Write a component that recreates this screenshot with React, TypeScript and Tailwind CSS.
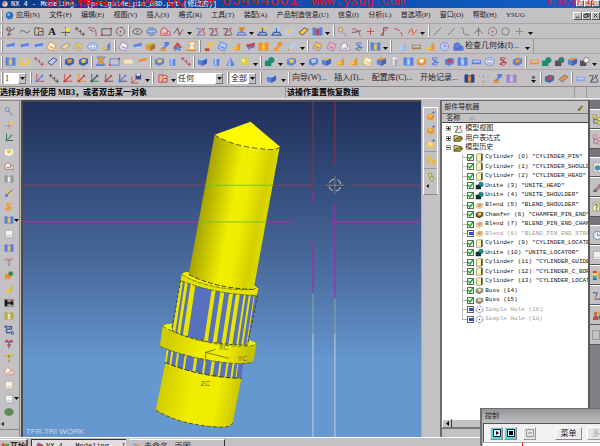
import React from "react"

const B = "#5b82dc"
const L = "#b4ccf8"
const Y = "#f2c648"
const O = "#ee922c"
const R = "#c8474b"
const K = "#55505a"
const G = "#1f8a74"
const W = "#f3f1ea"
const P = "#a284c4"

type IconDef = [kind: string, a?: string, b?: string]

const shapes: Record<string, (a: string, b: string) => React.JSX.Element> = {
  sketch: (a, b) => <g fill="none" stroke={a}><circle cx="4" cy="3.5" r="2" /><path d="M5 6L11 2M5 6L3 10L7 8.500" /><path d="M1 4h3M3 9l2 2" stroke={b} /></g>,
  wave: (a) => <path d="M1 7C3 4 5 5 6.500 6.500S10 8 11.500 5" fill="none" stroke={a} />,
  panel: (a, b) => <g stroke={a}><path d="M2 2h4v8H2zM6 6h5v4H6zM6 2l5 1v3" fill="none" /><path d="M3 8L9 3" stroke={b} strokeWidth="1.500" /></g>,
  star: (a, b) => <g><path d="M6 1v10M1 7h10" stroke={a} /><circle cx="8" cy="4" r="2.500" fill={b} /></g>,
  dots: (a, b) => <g fill="none" stroke={a}><path d="M1 3h4M3 1v4M5 6h3M7 4v4M8 9h4M10 7v4" /><path d="M4 4l5 5" stroke={b} strokeWidth=".7" /></g>,
  corner: (a, b) => <g fill="none" stroke={a}><path d="M1 2h5Q10 2 10 11" /><path d="M3 4l4 2" stroke={b} /></g>,
  rect: (a, b) => <g><path d="M1 3h10v7H1z" fill="none" stroke={a} /><path d="M0 9h2v2H0zM10 2h2v2h-2z" fill={b} /></g>,
  circle: (a, b) => <g><circle cx="6" cy="6" r="4.500" fill="none" stroke={a} strokeDasharray="4 1" /><circle cx="6" cy="6" r="1" fill={b} /></g>,
  ring: (a) => <circle cx="6" cy="6" r="4" fill="none" stroke={a} />,
  ellipse: (a, b) => <g><ellipse cx="6" cy="6" rx="5" ry="3" fill="none" stroke={a} /><circle cx="6" cy="6" r="1.200" fill={b} /></g>,
  blob: (a, b) => <g><ellipse cx="6" cy="6" rx="5" ry="4" fill={b} stroke={a} /><path d="M3 5q3-2 6 0M3 7q3 2 6 0" fill="none" stroke={a} /></g>,
  dome: (a, b) => <g><path d="M1 10V6q0-4 4-4 2 0 3 3 3 0 3 3v2z" fill={b} stroke={a} /><path d="M3 8h5V5" fill="none" stroke={a} /></g>,
  zig: (a, b) => <g><path d="M1 8l4-5 2 6 4-5" fill="none" stroke={a} /><path d="M4 2h2v2H4zM6 8h2v2H6z" fill={b} /></g>,
  cut: (a, b) => <g fill="none"><path d="M1 3h5L3 10h7" stroke={a} /><path d="M11 2L2 10M8 2l3 8" stroke={b} /></g>,
  project: (a, b) => <g><path d="M3 1h7l-2 5H4z" fill={b} /><path d="M1 10L3 7h6l2 3zM6 2v6" fill="none" stroke={a} strokeWidth="1.300" /></g>,
  plus: (a) => <path d="M6 2v8M2 6h8" stroke={a} />,
  arc: (a, b) => <g fill="none"><path d="M1 3Q9 3 10 11" stroke={a} /><path d="M1 7Q6 7 11 5" stroke={b} /></g>,
  step: (a, b) => <g fill="none"><path d="M2 10h3V2h5" stroke={a} /><path d="M5 6L10 2M5 6L2 10" stroke={b} /></g>,
  line: (a) => <path d="M2 10L10 2" stroke={a} />,
  spline: (a) => <path d="M2 2Q6 2 5 6T11 10" fill="none" stroke={a} />,
  anchor: (a) => <path d="M6 1v10M1 8Q6 3 11 8M4 4h4" fill="none" stroke={a} />,
  sheet: (a, b) => <g><path d="M1 4L11 2L10 8Q6 7 4 10z" fill={b} /><path d="M1 4L11 2L10 6Q6 5 3 7z" fill={a} /></g>,
  plane: (a, b) => <g><path d="M4 1l7 3-3 7-7-3z" fill={b} stroke={a} /><path d="M4 6l4 2" stroke={a} strokeWidth="1.500" /></g>,
  slab: (a, b) => <path d="M1 7l6-5 4 2-6 6z" fill={b} stroke={a} />,
  bend: (a, b) => <g><path d="M6 1h5v3L7 7v4H2V8l4-2z" fill={a} /><path d="M2 8l5 0v3H2z" fill={b} /></g>,
  wedge: (a, b) => <g><path d="M10 1v9H3L1 8l5-2z" fill={a} /><path d="M3 10L1 8l5-2 2 2z" fill={b} /></g>,
  cube: (a, b) => <g><path d="M1 4l5-2 5 1v5l-5 3-5-2z" fill={a} /><path d="M1 4l5-2 5 1-5 2z" fill={b} /><path d="M6 5l5-2v5l-5 3z" fill="#1d2c5c" opacity=".35" /></g>,
  pocket: (a, b) => <g><path d="M1 4l5-2 5 1v5l-5 3-5-2z" fill={a} /><path d="M3 5l3-2 3 1-1 3-3 1z" fill={b} /></g>,
  cylinder: (a, b) => <g><path d="M3 2.500h6v8H3z" fill={a} /><path d="M4 3h2v7H4z" fill={b} /><ellipse cx="6" cy="2.500" rx="3" ry="1" fill={b} /></g>,
  solid: () => <g><path d="M2 2l2-1h6v9l-2 1H2z" fill="#f7f2b8" stroke="#77754c" strokeWidth=".8" /><path d="M8 2l2-1v9l-2 1z" fill="#55543c" /></g>,
  cone: (a, b) => <g><path d="M6 1l4.500 9Q6 12 1.500 10z" fill={a} /><path d="M6 1v10L3 10z" fill={b} /></g>,
  sphere: (a, b) => <g><circle cx="6" cy="6" r="4" fill={a} /><circle cx="5" cy="5" r="1.500" fill={b} /></g>,
  books: (a, b) => <g stroke={a} strokeWidth=".8"><path d="M1 2h3v8H1zM8 2h3v8H8z" fill={a} /><path d="M4 3h4v7H4z" fill={b} /></g>,
  roof: (a, b) => <g><path d="M6 1l5 6-2 1-3-3-3 4-2-1z" fill={a} /><path d="M6 5l4 5-2 1-2-2-2 2-2-1z" fill={b} /></g>,
  bar: (a, b) => <g><path d="M1 4h10v5H1z" fill={a} /><path d="M2 5h8v2H2z" fill={b} /></g>,
  hour: (a, b) => <g><path d="M2 1h9L8 5l3 5H1l4-5z" fill={b} stroke={a} strokeWidth=".8" /><path d="M1 10h9" stroke={a} strokeWidth="2" /></g>,
  csys: (a, b) => <g fill="none"><path d="M3 1v8h8" stroke={a} /><path d="M3 9l6-6" stroke={b} strokeWidth="1.300" /><path d="M1.500 8h3v2h-3zM8 2h2v2H8z" fill={b} /></g>,
  union: (a, b) => <g><path d="M1 5h7v6H1z" fill={a} /><circle cx="8" cy="4.500" r="3" fill={b} stroke={a} strokeWidth=".7" /></g>,
  pencil: (a, b) => <g><path d="M2 9l6-7 3 2-6 7H2z" fill={a} /><path d="M1 11l2-3 2 2z" fill={b} /></g>,
  key: (a, b) => <g><circle cx="4" cy="4" r="2.500" fill={b} stroke={a} /><path d="M5 6l5 4-2 1" stroke={a} fill="none" /></g>,
  disk: (a, b) => <g><path d="M5 1h6v6H5z" fill={a} /><path d="M6 1h4v2H6z" fill={W} /><path d="M1 4v7h7M1 11l4-4" stroke={b} fill="none" /></g>,
  clock: (a, b) => <g><circle cx="6" cy="6" r="4.500" fill={b} stroke={a} /><path d="M6 3v3h3" fill="none" stroke={a} /></g>,
  page: (a, b) => <g><path d="M1.500 1.500h9v9h-9z" fill={b} stroke={a} strokeWidth=".8" /><path d="M3 8h6" stroke={a} strokeWidth=".6" /></g>,
  tree: (a, b) => <g><path d="M2 2v8h4M2 6h4" fill="none" stroke={a} /><path d="M1 1h4v3H1zM6 4h4v3H6zM6 8h4v3H6z" fill={b} stroke={a} strokeWidth=".5" /></g>,
  web: (a, b) => <g><path d="M2 1h8v10H2z" fill={W} stroke="#8b91a8" strokeWidth=".7" /><circle cx="6" cy="6.500" r="3" fill={a} /><path d="M3.500 6.500q3-3 5 0" stroke={b} fill="none" /></g>,
  help: (a, b) => <g><path d="M1 1h7v9H1z" fill={b} stroke={a} strokeWidth=".7" /><path d="M3 4q0-2 2-1.500T5 6v1M5 8v1.300" fill="none" stroke="#28409c" /></g>,
  rainbow: () => <g><path d="M1 1h4v2.500H1z" fill="#e33" /><path d="M1 3.500h4V6H1z" fill="#fd3" /><path d="M1 6h4v2.500H1z" fill="#3c5" /><path d="M1 8.500h4V11H1z" fill="#36d" /><path d="M7 2h4v8H7z" fill={O} /></g>,
  flag: () => <g><path d="M1 2q2-1 4 0v4q-2-1-4 0z" fill="#e0442c" /><path d="M6 2q2 1 5 0v4q-3 1-5 0z" fill="#3ca83c" /><path d="M1 7q2-1 4 0v4q-2-1-4 0z" fill="#3464cc" /><path d="M6 7q2 1 5 0v4q-3 1-5 0z" fill="#f2c62c" /></g>,
  dumbbell: (a, b) => <g><path d="M0 1h12v10H0z" fill="#999" /><path d="M1 2h3v8H1zM8 4h3v4H8zM4 5h4v2H4z" fill={a} /><path d="M8 2h3v2H8z" fill={b} /></g>,
  people: (a, b) => <g><circle cx="4" cy="4" r="2" fill={a} /><path d="M1 11q0-5 3-5t3 5z" fill={b} /><circle cx="9" cy="3" r="2" fill={O} /><path d="M7 10q0-5 2-5t2 5z" fill={G} /></g>,
  fold: (a, b) => <g><path d="M3 1l6 1-3 3 4 2-4 4-5-2 4-3-3-2z" fill={a} /><path d="M3 2l5 1-3 1zM4 8l4 0-2 2z" fill={b} /></g>,
  puff: (a, b) => <g><path d="M2 5l2-2 3 1 3 2-1 4-4 1-4-2z" fill={a} /><circle cx="5" cy="6" r="2" fill={b} /><path d="M9 0v4M7 2h4" stroke="#4a70c8" /></g>,
  bead: (a, b) => <g fill={a}><circle cx="4" cy="3.500" r="2.500" /><circle cx="3" cy="8.500" r="2.500" /><circle cx="9" cy="8.500" r="2.500" /><circle cx="4" cy="3" r="1" fill={b} /></g>,
  chain: (a, b) => <g fill={b} stroke={a}><ellipse cx="5" cy="4" rx="2" ry="3" /><ellipse cx="7" cy="8" rx="2" ry="3" /></g>,
  tools: (a, b) => <g><path d="M2 2l8 8" stroke={b} strokeWidth="1.800" /><path d="M10 2L3 9" stroke={K} /><circle cx="3" cy="9" r="2" fill={a} /></g>,
  tbar: (a, b) => <g><path d="M1 3h10M6 3v8" stroke={a} strokeWidth="1.500" /><path d="M2 1h3v3H2zM7 1h3v3H7zM4 6h4v2H4z" fill={b} /></g>,
  linkage: (a, b) => <g fill="none" stroke={a}><path d="M2 2h7v3H3v4h8" strokeWidth="1.500" /><path d="M1 1h2v2H1zM9 8h2v3H9z" fill={b} /></g>,
}

const Icon = ({ def, size = "size-[11px]" }: { def: IconDef; size?: string }) => {
  const [kind, a = K, b = L] = def
  if (kind === "text") return <span className="font-['Liberation_Serif',serif] text-[11px] leading-none font-bold">A</span>
  return (
    <svg viewBox="0 0 12 12" className={`${size} shrink-0`} aria-hidden="true">
      {shapes[kind](a, b)}
    </svg>
  )
}

const Caret = () => (
  <svg viewBox="0 0 5 3" className="h-[3px] w-[5px] shrink-0" aria-hidden="true">
    <path d="M0 0h5L2.500 3z" fill="#111" />
  </svg>
)

const Grip = () => (
  <span className="mx-px h-[12px] w-[2px] shrink-0 border-l border-white bg-[#8d8a90]" />
)

type Item = IconDef | "v"

const Group = ({ items, width }: { items: Item[]; width: string }) => (
  <div className={`flex h-full shrink-0 items-center ${width}`} role="toolbar">
    <Grip />
    {items.map((it, i) =>
      it === "v" ? (
        <button key={i} aria-label="more" className="mt-[5px] flex w-[8px] shrink-0 justify-center"><Caret /></button>
      ) : (
        <button key={i} aria-label={it[0]} className="flex min-w-0 flex-1 items-center justify-center"><Icon def={it} /></button>
      )
    )}
  </div>
)

const curveRow: { width: string; items: Item[] }[] = [
  { width: "w-[127px]", items: [["sketch", K, R], ["wave"], ["panel", K, Y], ["text"], ["star", K, "#efe33a"], ["dots", K, R], ["corner", R, K], ["rect", K, R], ["circle", K, R]] },
  { width: "w-[205px]", items: [["ellipse", K, R], ["blob", "#4b6496", L], ["dome", R, "#e8c8cc"], ["zig", K, R], "v", ["cut", B, R], ["cut", K, R], ["cut", K, R], ["project", B, O], "v", ["project", "#3c62b4", Y], ["project", "#3c62b4", L], ["pocket", L, Y], ["slab", K, Y], ["books", B, R], "v"] },
  { width: "w-[95px]", items: [["key", P, Y], ["arc", R, K], ["plus", R], ["step", K, R], ["arc", R, "#c4c1c4"], ["zig", R, O], "v"] },
  { width: "w-[107px]", items: [["line", "#777"], ["line", "#777"], ["spline", "#777"], ["anchor", "#777"], ["circle", "#777", R], ["ring", "#777"], ["plus", "#888"], "v"] },
]

const surfaceRow: { width: string; items: Item[] }[] = [
  { width: "w-[113px]", items: [["sheet", B, L], ["sheet", "#6b7ce0", L], ["sheet", B, L], ["plane", O, W], ["slab", "#a88d5a", "#e4d6a8"], ["plane", "#8eaede", Y], ["blob", B, W], ["wedge", B, Y]] },
  { width: "w-[85px]", items: [["plane", P, W], ["sheet", B, L], ["cube", O, "#9bd04a"], ["bend", B, O], ["roof", R, B], ["hour", O, W]] },
  { width: "w-[108px]", items: [["bend", Y, R], ["plane", B, L], ["wedge", O, Y], ["sheet", R, B], ["books", O, Y], ["bend", O, "#e7a24a"], ["pencil", L, O], "v"] },
  { width: "w-[60px]", items: [["plane", P, Y], ["plane", P, "#efb0b8"], ["dome", P, W], ["fold", B, Y]] },
  { width: "w-[23px]", items: [["books", B, Y], "v"] },
]

const featureRow: { width: string; items: Item[] }[] = [
  { width: "w-[59px]", items: [["books", B, Y], ["pocket", Y, L], ["dots", R, P], ["slab", "#39496e", L]] },
  { width: "w-[31px]", items: [["pocket", "#3565bc", O], ["pocket", "#3565bc", Y]] },
  { width: "w-[59px]", items: [["hour", B, O], ["rect", B, R], ["bar", "#e5dba6", W], ["sheet", O, L]] },
  { width: "w-[43px]", items: [["pocket", B, Y], ["cylinder", B, L], ["dots", R, B]] },
  { width: "w-[67px]", items: [["cube", B, L], ["cylinder", B, L], ["cone", B, L], ["sphere", "#dfd02c", "#fff9a0"], "v"] },
  { width: "w-[265px]", items: [["union", G, G], "v", ["pocket", B, Y], "v", ["pocket", B, L], ["cube", B, Y], ["wedge", O, Y], ["wedge", O, Y], ["plane", Y, W], ["cube", B, O], ["cylinder", "#a8a8b4", W], ["books", B, L], ["pocket", O, W], ["fold", B, L], ["pocket", B, R], ["books", B, L], ["bar", B, L], ["blob", B, W], ["fold", R, L], ["pocket", B, O]] },
  { width: "w-[75px]", items: [["bar", O, L], ["union", G, G], ["union", K, G], ["cube", B, O], ["union", K, W], "v"] },
]

const selectRow: Item[] = [["csys", R, B], ["dots", K, R], ["csys", R, R], ["csys", O, R], ["csys", "#258a38", K], ["csys", K, R], ["csys", K, B], ["disk", "#394a88", R], "v"]

const menus = ["应用(N)", "文件(F)", "编辑(E)", "视图(V)", "插入(S)", "格式(R)", "工具(T)", "装配(A)", "产品制造信息(U)", "信息(I)", "分析(L)", "首选项(P)", "窗口(O)", "帮助(H)", "YSUG"]

const sideTools: IconDef[] = [
  ["key", "#777a90", L], ["star", P, Y], ["csys", "#334c60", "#36a040"], ["pocket", W, Y], ["dome", "#a86a6a", W], ["books", "#999", W],
  ["tools", B, Y], ["fold", O, Y], ["books", B, Y], ["page", "#9a9aa8", W], ["books", B, Y], ["tbar", "#7880a8", "#d09aa0"], ["union", O, G],
  ["wedge", "#d4be40", Y], ["dumbbell", "#17171b", R], ["books", "#b4aa58", "#eee7a0"], ["linkage", "#3c5498", L], ["tbar", "#4461ba", R],
  ["tbar", "#8b8a44", "#d8c948"], ["dome", "#d98c80", W], ["page", "#aaa98a", W], ["page", "#8a9cb8", W], ["blob", "#626a5a", "#57a052"],
]

const Drop = ({ label, options, width }: { label: string; options: string[]; width: string }) => (
  <span className={`flex h-[11px] shrink-0 items-center bg-white ${width}`}>
    <select aria-label={label} className="h-[11px] min-w-0 flex-1 appearance-none bg-white pl-px text-[8px] leading-[11px]">
      {options.map((o) => <option key={o}>{o}</option>)}
    </select>
    <span className="flex h-[11px] w-[8px] items-center justify-center border border-white border-r-[#777] border-b-[#777] bg-[#c4c1c4]"><Caret /></span>
  </span>
)

type Feature = { icon: IconDef; name: string; off?: boolean }
const cyl: IconDef = ["solid"]
const unite: IconDef = ["union", "#10302e", "#159090"]
const blend: IconDef = ["pocket", "#e6d676", "#c98fc0"]
const boss: IconDef = ["pocket", "#8a8a80", "#e3dc9e"]
const features: Feature[] = [
  { icon: cyl, name: 'Cylinder (0) "CYLINDER_PIN"' },
  { icon: cyl, name: 'Cylinder (1) "CYLINDER_SHOULDER"' },
  { icon: cyl, name: 'Cylinder (2) "CYLINDER_HEAD"' },
  { icon: unite, name: 'Unite (3) "UNITE_HEAD"' },
  { icon: unite, name: 'Unite (4) "UNITE_SHOULDER"' },
  { icon: blend, name: 'Blend (5) "BLEND_SHOULDER"' },
  { icon: ["pocket", "#5a5330", Y], name: 'Chamfer (6) "CHAMFER_PIN_END"' },
  { icon: blend, name: 'Blend (7) "BLEND_PIN_END_CHAMFER"' },
  { icon: blend, name: 'Blend (8) "BLEND_PIN_END_STRAIGHT"', off: true },
  { icon: cyl, name: 'Cylinder (9) "CYLINDER_LOCATER"' },
  { icon: unite, name: 'Unite (10) "UNITE_LOCATOR"' },
  { icon: cyl, name: 'Cylinder (11) "CYLINDER_GUIDE"' },
  { icon: cyl, name: 'Cylinder (12) "CYLINDER_C_BORE"' },
  { icon: cyl, name: 'Cylinder (13) "CYLINDER_LOCATOR"' },
  { icon: boss, name: "Boss (14)" },
  { icon: boss, name: "Boss (15)" },
  { icon: ["circle", "#5d6a9c", "#2b3f9a"], name: "Simple Hole (16)", off: true },
  { icon: ["circle", "#5d6a9c", "#2b3f9a"], name: "Simple Hole (18)", off: true },
]

const Branch = ({ open, icon, label }: { open: boolean; icon: IconDef | "folder"; label: string }) => (
  <li className="flex min-h-0 flex-1 items-center gap-[2px] pl-[4px]">
    <button aria-label={label} className="flex size-[5px] items-center justify-center border border-[#999] bg-white">
      <svg viewBox="0 0 3 3" className="size-[3px]"><path d={open ? "M0 1h3v1H0z" : "M0 1h1V0h1v1h1v1H2v1H1V2H0z"} fill="#222" /></svg>
    </button>
    {icon === "folder" ? (
      <svg viewBox="0 0 12 10" className="h-[8px] w-[10px]">
        <path d="M1 9V2h4l1 1h4v2" fill="#e8df86" stroke="#3d3a18" />
        <path d="M1 9l3-4h8l-3 4z" fill="#a69a2a" stroke="#3d3a18" />
      </svg>
    ) : (
      <Icon def={icon} size="size-[10px]" />
    )}
    <span className="text-[7px] leading-none">{label}</span>
  </li>
)

const FeatureRow = ({ icon, name, off }: Feature) => (
  <li className="flex min-h-0 flex-1 items-center pl-[20px]">
    <span className="h-px w-[5px] shrink-0 bg-[#b5b5b5]" />
    <label className="flex items-center">
      <span className="relative flex size-[7px] shrink-0">
        <input type="checkbox" defaultChecked={!off} className="size-[7px] appearance-none border border-[#666] bg-white" />
        <svg viewBox="0 0 7 7" className="pointer-events-none absolute inset-0 size-[7px]">
          {off ? <path d="M2 2h4v3H2z" fill="#3049d8" /> : <path d="M1 3l2 2 3-4" fill="none" stroke="#18b428" strokeWidth="1.500" />}
        </svg>
      </span>
      <span className="ml-px flex"><Icon def={icon} size="size-[9px]" /></span>
      <span className={`ml-px font-['Liberation_Mono',monospace] text-[6px] leading-none whitespace-pre ${off ? "text-[#9c9c9c]" : "text-[#151515]"}`}>{name}</span>
    </label>
  </li>
)

// x at the upper edge and width of each bright flute on the knurled section
const upperFlutes = [[179, 3], [184, 3], [190, 5], [212, 4], [221, 4], [230, 4], [237, 4], [245, 2], [250, 2], [255, 1]]
const lowerFlutes = [[167, 2], [172, 2], [178, 2], [186, 2], [196, 3], [206, 2], [214, 3], [222, 2], [229, 2], [235, 2], [240, 1]]

const Viewport = () => (
  <svg viewBox="22 100 399 336" preserveAspectRatio="xMidYMid slice" className="absolute inset-0 h-full w-full">
    <defs>
      <linearGradient id="shaft" gradientUnits="userSpaceOnUse" x1="201" y1="200" x2="269" y2="213">
        <stop offset="0" stopColor="#a5a300" />
        <stop offset=".18" stopColor="#c3c100" />
        <stop offset=".45" stopColor="#f1ee00" />
        <stop offset=".62" stopColor="#efec00" />
        <stop offset=".85" stopColor="#d3d000" />
        <stop offset="1" stopColor="#dedb00" />
      </linearGradient>
      <linearGradient id="base" gradientUnits="userSpaceOnUse" x1="158" y1="388" x2="240" y2="403">
        <stop offset="0" stopColor="#cfcc00" />
        <stop offset=".4" stopColor="#f0ed00" />
        <stop offset=".7" stopColor="#f0ed00" />
        <stop offset="1" stopColor="#c4c100" />
      </linearGradient>
      <clipPath id="upper"><path d="M180 278Q215 293 257 294L247 344Q200 343 171 329z" /></clipPath>
      <clipPath id="lower"><path d="M166 345L243 360L241 377Q200 376 164 361z" /></clipPath>
    </defs>
    <g>
      <path d="M22 183h290v1H22zM353 183h68v1h-68z" fill="#84445f" />
      <path d="M22 220h271v1H22zM331 220h90v1h-90z" fill="#c024b0" />
      <path d="M312 100h1v90h-1zM334 100h1v63h-1z" fill="#92304f" />
      <path d="M312 190h1v11h-1zM312 240h1v51h-1zM334 202h1v94h-1z" fill="#b022ac" />
      <path d="M312 292h1v40h-1zM334 297h1v35h-1z" fill="#8ea79b" />
      <path d="M312 332h1v106h-1zM334 332h1v106h-1z" fill="#c1cfdf" />
    </g>
    <path d="M165 360L155 409Q180 424 220 426Q230 426 232 422L241 376z" fill="url(#base)" />
    <path d="M155 409Q180 424 220 426Q230 426 232 422" fill="none" stroke="#54531a" strokeDasharray="4 2" />
    <g clipPath="url(#lower)">
      <path d="M160 340h90v40h-90z" fill="#5871bc" />
      {lowerFlutes.map(([x, w]) => <path key={x} d={`M${x} 340h${w}l-6 42h-${w}z`} fill="#e8e500" />)}
    </g>
    <path d="M164 361Q200 376 241 377" fill="none" stroke="#33342a" strokeDasharray="5 2" />
    <path d="M162 325Q166 321 173 323L250 339L256 342L253 360Q246 363 232 362Q190 358 159 345z" fill="url(#base)" />
    <path d="M162 325Q166 321 173 323L172 329Q200 343 248 344L249 339L256 342Q250 346 235 345Q190 341 162 325z" fill="#f4f100" />
    <path d="M162 325Q195 343 240 345Q253 345 256 342M159 345Q190 358 232 362Q250 363 253 360" fill="none" stroke="#55541d" strokeWidth=".7" strokeDasharray="4 2" />
    <g clipPath="url(#upper)">
      <path d="M165 270h100v80h-100z" fill="#5871bc" />
      {upperFlutes.map(([x, w]) => <path key={x} d={`M${x} 282h${w}l-10 66h-${w}zM${x} 282h${w}v-10h-${w}z`} fill="#e8e500" />)}
      <path d="M202 302h1v1h-1zM197 326h1v1h-1z" fill="#9db8b0" />
    </g>
    <path d="M171 329Q200 343 248 344M180 279L171 328M257 294L247 343" fill="none" stroke="#47471c" strokeDasharray="3 2" />
    <path d="M181 273Q183 270 189 271L253 284L258 287L256 294Q215 293 180 279z" fill="#e4e100" />
    <path d="M181 273Q183 270 189 271L253 284L258 287Q248 291 225 287Q197 282 181 273z" fill="#f4f100" />
    <path d="M180 279Q215 293 256 294M181 273Q197 283 225 287Q248 290 258 286" fill="none" stroke="#55541d" strokeWidth=".7" strokeDasharray="5 1" />
    <path d="M214 133L188 273Q215 287 253 288L279 146z" fill="url(#shaft)" />
    <path d="M188 273Q215 287 253 288" fill="none" stroke="#3d3c1c" strokeDasharray="5 2" />
    <path d="M214 133L250 120L279.500 145Q274 149 260 147Q230 144 214 133z" fill="#fffa00" />
    <path d="M214 133Q230 144 260 147Q274 149 279 146" fill="none" stroke="#5b5920" strokeDasharray="5 3" />
    <path d="M205 183h68v1h-68zM198 220h68v1h-68z" fill="#72c820" />
    <path d="M205 360V351L228 357M205 351L215 348" fill="none" stroke="#66651c" strokeWidth=".8" />
    <g className="font-['Liberation_Sans',sans-serif] text-[7px]" fill="#6b6932">
      <text x="218" y="349">XC</text>
      <text x="237" y="360">YC</text>
      <text x="200" y="385">ZC</text>
    </g>
    <g fill="none">
      <circle cx="334.500" cy="183.500" r="6" stroke="#c8ced6" strokeDasharray="6 3.400" strokeDashoffset="-2" />
      <path d="M325 183.500h19M334.500 174v19" stroke="#202632" strokeWidth="2" />
      <path d="M325 183.500h19M334.500 174v19" stroke="#9ca3b0" />
    </g>
    <text x="25" y="433" fill="#c9d8ea" className="font-['Liberation_Sans',sans-serif] text-[8px]">TFR-TRI WORK</text>
  </svg>
)

const tabs: (IconDef | "gap")[] = [
  ["tree", "#6d7030", "#efe23e"], ["tree", "#a87078", "#e8b4b8"], "gap",
  ["web", "#4b94cc", "#3c9c4c"], ["pencil", "#a08088", "#564c64"], ["help", "#8b8a9c", "#f2ee8e"], "gap",
  ["clock", "#7a8794", "#e2ecf2"], ["page", "#8aa0b4", W], ["rainbow"], ["cut", "#3c50a0", Y], ["people", "#b8763c", "#c04848"],
]

const Navigator = () => (
  <section className="flex min-w-0 flex-1 flex-col border-t border-l-2 border-[#6c696e]">
    <header className="flex h-[12px] shrink-0 items-center justify-between pr-[4px] pl-[2px] text-[7px]">
      <h2>部件导航器</h2>
      <Icon def={["pencil", "#8b8330", "#222"]} size="size-[7px]" />
    </header>
    <div className="flex h-[10px] shrink-0 items-center gap-[10px] border-t border-b border-t-[#777] border-b-[#444] pl-[4px] text-[7px]">
      名称
      <svg viewBox="0 0 6 5" className="h-[4px] w-[5px]"><path d="M0 5l3-5 3 5z" fill="none" stroke="#999" /></svg>
    </div>
    <div className="min-h-0 flex-1 overflow-hidden bg-white pt-px">
      <ul className="relative flex h-[200px] flex-col">
        <span className="absolute top-[30px] bottom-[5px] left-[20px] w-px bg-[#c4c4c4]" />
        <Branch open={false} icon={["cut", "#208a58", R]} label="模型视图" />
        <Branch open={false} icon="folder" label="用户表达式" />
        <Branch open icon="folder" label="模型历史" />
        {features.map((f) => <FeatureRow key={f.name} {...f} />)}
      </ul>
    </div>
    <div className="flex h-[9px] shrink-0 bg-[#d6d3d6]">
      <button aria-label="scroll left" className="flex w-[10px] items-center justify-center border border-white border-r-[#333] border-b-[#777] bg-[#c4c1c4]">
        <svg viewBox="0 0 3 5" className="h-[5px] w-[3px]"><path d="M3 0v5L0 2.500z" fill="#000" /></svg>
      </button>
      <span className="flex-1 border-t border-b border-white border-b-[#777] bg-[#c4c1c4]" />
    </div>
    <div className="h-[9px] shrink-0 border-t border-[#777]" />
  </section>
)

const ControlWindow = () => (
  <section className="absolute right-0 bottom-0 h-[38px] w-[120px] overflow-hidden border-t border-l-2 border-[#6f6f72] bg-[#b4b3b5]">
    <h2 className="h-[14px] bg-linear-to-b from-[#969698] to-[#c0bfc1] pl-[3px] text-[7px] leading-[14px]">控制</h2>
    <div className="ml-px flex h-[19px] items-center border-t border-l border-[#555] bg-[#f1f1f1] pl-[6px]">
      <button aria-label="play" className="flex size-[13px] shrink-0 items-center justify-center border border-[#e5e5e5] border-r-[#888] border-b-[#888] bg-[#58d4d6]">
        <svg viewBox="0 0 8 8" className="size-[8px]"><path d="M.5.500h7v7h-7z" fill="#def" stroke="#123" /><path d="M3 2v4l3-2z" /></svg>
      </button>
      <button aria-label="stop" className="ml-px flex size-[13px] shrink-0 items-center justify-center border border-[#e5e5e5] border-r-[#888] border-b-[#888] bg-[#58d4d6]">
        <svg viewBox="0 0 8 8" className="size-[8px]"><path d="M.5.500h7v7h-7z" fill="#def" stroke="#123" /><path d="M2 2h4v4H2z" /></svg>
      </button>
      <button aria-label="pause" disabled className="ml-[6px] flex size-[13px] shrink-0 items-center justify-center border border-white border-r-[#999] border-b-[#999] bg-[#e2e2e2]">
        <svg viewBox="0 0 8 8" className="size-[8px]"><path d="M.5.500h7v7h-7z" fill="none" stroke="#999" /><path d="M2 4h4" stroke="#888" /></svg>
      </button>
      <button className="ml-[19px] h-[13px] w-[27px] shrink-0 border border-white border-r-[#888] border-b-[#888] bg-[#ececec] text-[8px] leading-[11px]">菜单</button>
      <button disabled className="ml-[5px] h-[13px] flex-1 border-t border-b border-l border-white border-b-[#999] bg-[#e6e6e6] pl-[4px] text-left text-[8px] leading-[11px] text-[#aaa]">多</button>
    </div>
    <div className="ml-px h-[4px] border-t border-[#aaa] bg-white">
      <span className="ml-[39px] block h-[3px] w-px bg-red-600" />
    </div>
  </section>
)

const App = () => (
  <div className="relative flex h-screen w-full flex-col overflow-hidden bg-[#c4c1c4] font-['Liberation_Serif','Noto_Sans_CJK_SC',serif] text-[7px] text-[#1c1a1e]">
    <header className="relative h-[8px] shrink-0 overflow-hidden bg-linear-to-r from-[#0d3a8c] to-[#0f61c8] text-white">
      <div className="flex h-[8px] items-center gap-[2px] pl-px">
        <Icon def={["sphere", "#e3d3b8", R]} size="size-[8px]" />
        <h1 className="font-['Liberation_Mono','Noto_Sans_CJK_SC',monospace] text-[7px] leading-[8px] whitespace-pre">NX 4 - Modeling - [prt_guide_pin_DBD.prt (修改的)]</h1>
      </div>
      <div className="absolute top-0 right-0 flex h-[7px]">
        {["minimize", "restore", "close"].map((s) => (
          <button key={s} aria-label={s} className="w-[8px] border border-white border-r-[#555] border-b-[#555] bg-[#c4c1c4]" />
        ))}
      </div>
      <div className="absolute -top-[8px] left-[45px] flex items-baseline font-['Liberation_Mono','Noto_Sans_CJK_SC',monospace] text-[16px] leading-[18px] whitespace-pre text-[#e01818]">
        <span>例仕模具设计网 QQ 69</span>
        <span className="ml-[7px]">85444801</span>
        <span className="ml-[13px] text-[13px]">www.ysug.com</span>
      </div>
      <span className="absolute top-0 right-[5px] font-['Liberation_Mono',monospace] text-[8px] leading-[6px] text-[#e01818]">6:20/27:41</span>
    </header>

    <nav className="flex h-[16px] shrink-0 items-center border-b border-[#a9a6aa]">
      <Grip />
      <Icon def={["sphere", "#2f6fc0", "#7cc4ea"]} />
      <ul className="flex w-[510px] items-center justify-between pl-px text-[7px] whitespace-nowrap">
        {menus.map((m) => <li key={m}><button>{m}</button></li>)}
      </ul>
      <div className="ml-auto flex">
        {["M2 6h4", "M3 3V2h4v3H5M1 3h4v3H1z", "M2 2l4 4M6 2l-4 4"].map((d) => (
          <button key={d} aria-label="window" className="flex h-[8px] w-[9px] shrink-0 items-center justify-center border border-white border-r-[#555] border-b-[#555]">
            <svg viewBox="0 0 8 8" className="size-[7px]"><path d={d} fill="none" stroke="#222" /></svg>
          </button>
        ))}
      </div>
    </nav>

    <div className="flex h-[15px] shrink-0 border-b border-[#aaa7ab]">
      {curveRow.map((g) => <Group key={g.width} {...g} />)}
    </div>
    <div className="flex h-[15px] shrink-0 border-b border-[#aaa7ab]">
      {surfaceRow.map((g) => <Group key={g.width} {...g} />)}
      <div className="flex h-full w-[145px] items-center border-r border-[#999]">
        <Grip />
        <div className="flex w-[72px] shrink-0 justify-around pl-[2px]">
          {([["wedge", "#8bc0de", L], ["bar", "#a5814c", L], ["wedge", O, Y], ["clock", P, L], ["dome", "#4468b8", B]] as IconDef[]).map((d, i) => (
            <button key={i} aria-label={d[0]}><Icon def={d} /></button>
          ))}
        </div>
        <button className="flex-1 text-left text-[8px] leading-[10px] whitespace-nowrap">检查几何体(I)...</button>
        <button aria-label="more" className="mt-[5px] mr-[3px]"><Caret /></button>
      </div>
    </div>
    <div className="flex h-[16px] shrink-0 border-b border-[#aaa7ab]">
      {featureRow.map((g, i) => <Group key={i} {...g} />)}
    </div>

    <div className="flex h-[17px] shrink-0 items-center border-b border-[#8d8a90]">
      <Grip />
      <Drop label="layer" options={["1"]} width="w-[22px]" />
      <span className="w-[3px]" />
      <Group width="w-[122px]" items={selectRow} />
      <Group width="w-[26px]" items={[["panel", R, Y], "v"]} />
      <Drop label="filter" options={["任何"]} width="w-[46px]" />
      <span className="w-[3px]" />
      <Grip />
      <Drop label="scope" options={["全部"]} width="w-[26px]" />
      <span className="w-[3px]" />
      <Group width="w-[28px]" items={[["cube", B, L], "v"]} />
      <Grip />
      <div className="flex w-[167px] shrink-0 justify-between pl-px text-[8px] leading-[12px] whitespace-nowrap">
        {["向导(W)...", "插入(I)...", "配置库(C)...", "开始记录..."].map((t) => <button key={t}>{t}</button>)}
      </div>
      <div className="ml-[4px] flex w-[56px] justify-around">
        {([["books", "#2b408c", O], ["tbar", O, L], ["bend", B, O], ["books", P, L]] as IconDef[]).map((d, i) => (
          <button key={i} aria-label={d[0]}><Icon def={d} /></button>
        ))}
      </div>
      <button className="ml-auto flex flex-col items-center pr-[3px] text-[8px] leading-[7px] font-bold">»<Caret /></button>
      <Group width="w-[31px]" items={[["pocket", "#4a66a8", R], ["slab", "#5c7cb8", O]]} />
      <Group width="w-[30px]" items={[["bar", "#8aa6da", L], ["cut", K, K]]} />
    </div>

    <div className="flex h-[12px] shrink-0 items-center border-b border-[#f0eef0] text-[8px] leading-[11px] font-bold text-black">
      <p className="w-[286px] shrink-0 border-r border-[#999] whitespace-pre">选择对象并使用 MB3，或者双击某一对象</p>
      <p className="flex-1 pl-px">该操作重置恢复数据</p>
      <span className="h-full w-[12px] border-l border-[#999]" />
      <span className="h-full w-[14px] border-l border-[#999]" />
    </div>

    <main className="flex min-h-0 flex-1 pt-px">
      <aside className="flex w-[20px] shrink-0 flex-col border-t border-r border-[#8d8a90] pt-[3px]">
        {sideTools.map((t, i) => (
          <button key={i} aria-label={t[0]} className="flex min-h-0 flex-1 items-center pl-[4px]">
            <Icon def={t} size="size-[10px]" />
            {(i === 8 || i === 21) && <Caret />}
          </button>
        ))}
        <button aria-label="collapse" className="flex h-[10px] items-center pl-px">
          <svg viewBox="0 0 3 5" className="h-[4px] w-[3px]"><path d="M3 0v5L0 2.500z" /></svg>
        </button>
        <div className="h-[8px] border-t border-[#888]" />
      </aside>
      <section className="relative ml-px min-w-0 grow-[399] basis-0 overflow-hidden border-t-2 border-l-2 border-[#4c4b50] bg-linear-to-b from-[#20305a] via-[#4a6c9f] via-50% to-[#6698d0] to-78%">
        <Viewport />
      </section>
      <aside className="flex w-[19px] shrink-0 flex-col border-l border-[#aaa] pl-px">
        <div className="mt-[7px] flex h-[88px] w-[15px] flex-col items-center border border-t-white border-r-white border-b-[#888] border-l-white pt-px">
          {([["puff", O, Y], ["puff", O, Y], ["puff", Y, "#f8e9a0"]] as IconDef[]).map((d, i) => (
            <button key={i} aria-label={d[0]} className="flex h-[14px] items-center"><Icon def={d} size="size-[10px]" /></button>
          ))}
          <button aria-label="beads" className="flex h-[18px] w-full items-center justify-center border-t border-b border-[#999]"><Icon def={["bead", "#e8b83c", "#f8e58c"]} size="size-[10px]" /></button>
          <button aria-label="link" className="flex h-[15px] items-center"><Icon def={["chain", "#8d8a4c", "#d8d49a"]} size="size-[10px]" /></button>
          <button aria-label="collapse" className="w-full pl-[2px]">
            <svg viewBox="0 0 3 5" className="h-[4px] w-[3px]"><path d="M3 0v5L0 2.500z" /></svg>
          </button>
        </div>
      </aside>
      <div className="flex min-w-0 grow-[148] basis-0"><Navigator /></div>
      <aside className="flex w-[12px] shrink-0 flex-col border-l-2 border-[#5c5a5e] bg-[#828084]">
        <span className="h-[9px] shrink-0 bg-[#77757a]" />
        {tabs.map((t, i) =>
          t === "gap" ? (
            <span key={i} className="h-[8px] shrink-0 bg-[#77757a]" />
          ) : (
            <button key={i} aria-label={t[0]} className="flex h-[20px] shrink-0 items-center overflow-hidden border-t border-b border-t-white border-b-[#555] bg-[#c4c1c4] pl-[2px]"><Icon def={t} /></button>
          )
        )}
        <span className="flex h-[20px] shrink-0 items-center border-b border-[#555] bg-[#c4c1c4] pl-[2px]"><span className="h-[10px] w-full border border-[#999]" /></span>
      </aside>
    </main>

    <footer className="flex h-[9px] shrink-0 items-start gap-[3px] overflow-hidden border-t border-white bg-[#c4c1c4] pt-px text-[8px]">
      <button className="flex h-[14px] w-[28px] shrink-0 items-center border-t border-r-2 border-t-white border-r-[#555] pl-px font-bold whitespace-nowrap">
        <Icon def={["flag"]} size="size-[9px]" />开始
      </button>
      <button className="flex h-[14px] w-[95px] shrink-0 items-center gap-[2px] overflow-hidden border-t border-l border-[#333] bg-[#e0dee0] pl-[3px] font-['Liberation_Mono',monospace] text-[7px] whitespace-nowrap">
        <Icon def={["plane", B, R]} size="size-[9px]" />NX 4 - Modeling - [
      </button>
      <button className="flex h-[14px] w-[96px] shrink-0 items-center gap-[3px] border-t border-r border-t-white border-r-[#333] pl-[3px] whitespace-nowrap">
        <Icon def={["cut", B, O]} size="size-[9px]" />未命名 - 画图
      </button>
    </footer>

    <ControlWindow />
  </div>
)

export default App
